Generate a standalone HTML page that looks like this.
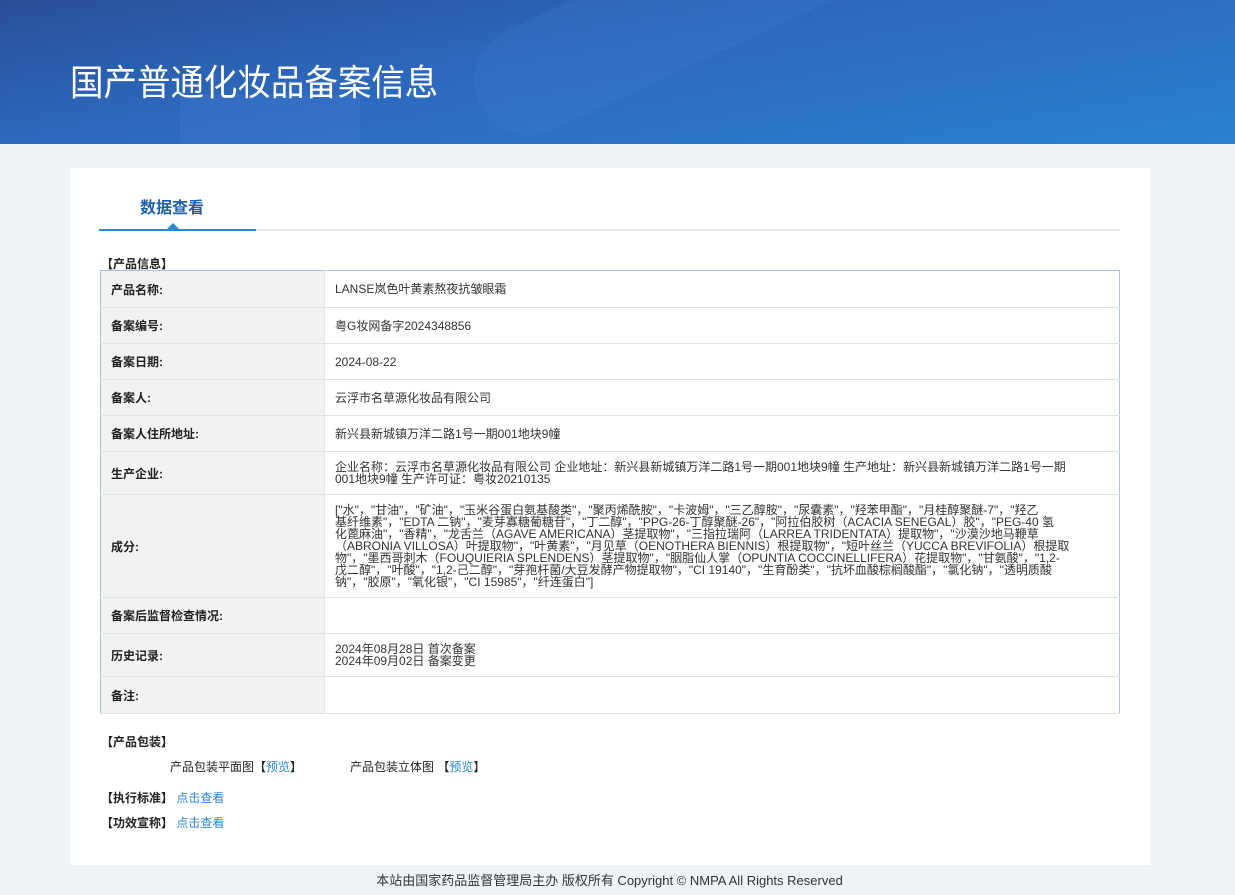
<!DOCTYPE html>
<html><head><meta charset="utf-8"><style>
*{margin:0;padding:0;box-sizing:border-box}
body{width:1235px;height:895px;background:#eff3f6;font-family:"Liberation Sans","Noto Sans CJK SC",sans-serif;font-size:12px;color:#333;position:relative;overflow:hidden}
.hd{position:absolute;left:0;top:0;width:1235px;height:144px;background:linear-gradient(170deg,#2a4f98 0%,#2c68bd 40%,#2a80d2 100%);overflow:hidden}
.hd .s1{position:absolute;left:460px;top:-40px;width:420px;height:110px;border-radius:55px;background:rgba(80,150,230,.13);transform:rotate(-25deg)}
.hd .s2{position:absolute;left:180px;top:95px;width:180px;height:60px;background:rgba(90,140,230,.18)}
.hd h1{position:absolute;left:70px;top:54px;font-size:36px;font-weight:normal;color:#fff;font-family:"Noto Sans CJK SC",sans-serif;transform:scaleX(.93);transform-origin:0 0;white-space:nowrap}
.card{position:absolute;left:70px;top:168px;width:1080px;height:697px;background:#fff}
.tab{position:absolute;left:70px;top:26px;font-size:16px;font-weight:bold;color:#1f5fa8}
.line{position:absolute;left:29px;top:61px;width:1021px;height:2px;background:#e8e8e8}
.line2{position:absolute;left:29px;top:61px;width:157px;height:2px;background:#2b86d6}
.tri{position:absolute;left:97px;top:55px;width:0;height:0;border-left:6px solid transparent;border-right:6px solid transparent;border-bottom:6px solid #2b86d6}
.sec{position:absolute;font-size:12px;font-weight:bold;color:#222}
table{position:absolute;left:30px;top:102px;width:1020px;border-collapse:collapse;border:1px solid #a9c3e8}
td{border-bottom:1px solid #e3e3e3;font-size:12px;vertical-align:middle}
td.l{width:224px;background:#f2f2f2;font-weight:bold;padding-left:10px;color:#222;border-right:1px solid #e3e3e3}
td.r{padding-left:10px;color:#333;line-height:12px}
.ing{line-height:10.7px;font-size:12px}
a{color:#2b86d6;text-decoration:none}
.ft{position:absolute;left:-8px;top:870px;width:1235px;text-align:center;font-size:13px;color:#333}
</style></head><body>
<div class="hd"><div class="s1"></div><div class="s2"></div><h1>国产普通化妆品备案信息</h1></div>
<div class="card">
<div class="tab">数据查看</div>
<div class="line"></div><div class="line2"></div><div class="tri"></div>
<div class="sec" style="left:31px;top:87px">【产品信息】</div>
<table>
<tr style="height:37px"><td class="l">产品名称:</td><td class="r">LANSE岚色叶黄素熬夜抗皱眼霜</td></tr>
<tr style="height:36px"><td class="l">备案编号:</td><td class="r">粤G妆网备字2024348856</td></tr>
<tr style="height:36px"><td class="l">备案日期:</td><td class="r">2024-08-22</td></tr>
<tr style="height:36px"><td class="l">备案人:</td><td class="r">云浮市名草源化妆品有限公司</td></tr>
<tr style="height:36px"><td class="l">备案人住所地址:</td><td class="r">新兴县新城镇万洋二路1号一期001地块9幢</td></tr>
<tr style="height:43px"><td class="l">生产企业:</td><td class="r">企业名称：云浮市名草源化妆品有限公司 企业地址：新兴县新城镇万洋二路1号一期001地块9幢 生产地址：新兴县新城镇万洋二路1号一期<br>001地块9幢 生产许可证：粤妆20210135</td></tr>
<tr style="height:103px"><td class="l">成分:</td><td class="r ing">["水"，"甘油"，"矿油"，"玉米谷蛋白氨基酸类"，"聚丙烯酰胺"，"卡波姆"，"三乙醇胺"，"尿囊素"，"羟苯甲酯"，"月桂醇聚醚-7"，"羟乙<br>基纤维素"，"EDTA 二钠"，"麦芽寡糖葡糖苷"，"丁二醇"，"PPG-26-丁醇聚醚-26"，"阿拉伯胶树（ACACIA SENEGAL）胶"，"PEG-40 氢<br>化蓖麻油"，"香精"，"龙舌兰（AGAVE AMERICANA）茎提取物"，"三指拉瑞阿（LARREA TRIDENTATA）提取物"，"沙漠沙地马鞭草<br>（ABRONIA VILLOSA）叶提取物"，"叶黄素"，"月见草（OENOTHERA BIENNIS）根提取物"，"短叶丝兰（YUCCA BREVIFOLIA）根提取<br>物"，"墨西哥刺木（FOUQUIERIA SPLENDENS）茎提取物"，"胭脂仙人掌（OPUNTIA COCCINELLIFERA）花提取物"，"甘氨酸"，"1,2-<br>戊二醇"，"叶酸"，"1,2-己二醇"，"芽孢杆菌/大豆发酵产物提取物"，"CI 19140"，"生育酚类"，"抗坏血酸棕榈酸酯"，"氯化钠"，"透明质酸<br>钠"，"胶原"，"氧化银"，"CI 15985"，"纤连蛋白"]</td></tr>
<tr style="height:36px"><td class="l">备案后监督检查情况:</td><td class="r"></td></tr>
<tr style="height:43px"><td class="l">历史记录:</td><td class="r">2024年08月28日 首次备案<br>2024年09月02日 备案变更</td></tr>
<tr style="height:37px"><td class="l">备注:</td><td class="r"></td></tr>
</table>
<div class="sec" style="left:31px;top:565px">【产品包装】</div>
<div style="position:absolute;left:100px;top:590px;color:#222">产品包装平面图【<a>预览</a>】</div>
<div style="position:absolute;left:280px;top:590px;color:#222">产品包装立体图 【<a>预览</a>】</div>
<div class="sec" style="left:31px;top:621px">【执行标准】 <a style="font-weight:normal">点击查看</a></div>
<div class="sec" style="left:31px;top:646px">【功效宣称】 <a style="font-weight:normal">点击查看</a></div>
</div>
<div class="ft">本站由国家药品监督管理局主办 版权所有 Copyright © NMPA All Rights Reserved</div>
</body></html>
